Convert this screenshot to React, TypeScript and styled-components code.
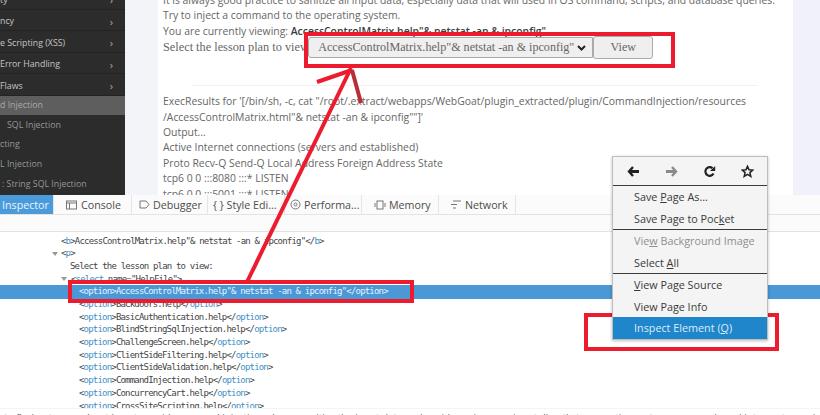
import React from "react";
import styled, { createGlobalStyle } from "styled-components";

const Global = createGlobalStyle`
  html, body { margin: 0; padding: 0; background: #fff; }
  body { font-family: "Liberation Sans", sans-serif; }
`;
const Page = styled.div`
  position: relative; width: 820px; height: 415px; overflow: hidden; background: #fff;
  display: flex; flex-direction: column;
`;
const Top = styled.div`
  height: 195px; display: flex; background: #f1f1f9; flex: none;
`;
const Sidebar = styled.div`
  width: 125px; height: 195px; background: #2c2c2c; overflow: hidden; flex: none;
  display: flex; flex-direction: column;
`;
const SideRow = styled.div<{ $active?: boolean; $sub?: boolean; $first?: boolean; $pad?: number }>`
  height: ${p => (p.$sub ? 19.6 : 21.5)}px; flex: none; display: flex; align-items: center; justify-content: space-between;
  box-sizing: border-box; padding: ${p => (p.$sub ? 0 : 3)}px 12px 0 ${p => p.$pad ?? 0}px;
  margin-top: ${p => (p.$first ? -12 : 0)}px;
  font: 8.8px "Open Sans", sans-serif; white-space: nowrap;
  color: ${p => (p.$active ? "#a9a9a9" : p.$sub ? "#969696" : "#c4c4c4")};
  background: ${p => (p.$active ? "#5e5e5e" : "transparent")};
  border-bottom: ${p => (p.$sub ? "0" : "1px solid #232323")};
`;
const Chevron = styled.span` color: #aaa; font-size: 11px; `;
const Gutter = styled.div` width: 33px; flex: none; background: #f3f3fa; `;
const Card = styled.div`
  width: 635px; flex: none; background: #fff; box-sizing: border-box; padding: 0 0 0 5px; height: 195px; overflow: hidden;
  font: 10.4px/15.4px "Open Sans", sans-serif; color: #666;
`;
const Line = styled.div` white-space: nowrap; `;
const TopLine = styled(Line)` margin-top: -7px; `;
const Strong = styled.b` font-weight: 600; color: #3c3c3c; `;
const PlanRow = styled.div`
  display: flex; align-items: center; height: 21px; margin-top: -2px;
  font: 12.3px "Liberation Serif", serif; color: #666; white-space: nowrap;
`;
const PlanSelect = styled.div`
  width: 285px; height: 21px; box-sizing: border-box; margin-left: -4px; padding: 0 6px 0 9px;
  display: flex; align-items: center; justify-content: space-between;
  background: #efefef; border: 1px solid #aaa; border-radius: 3px 0 0 3px;
  font: 12.1px "Liberation Serif", serif; color: #666;
`;
const PlanButton = styled.div`
  width: 60px; height: 23px; box-sizing: border-box; display: flex; align-items: center; justify-content: center;
  background: #efefef; border: 1px solid #aaa; border-radius: 3px;
  font: 12px "Liberation Serif", serif; color: #666;
`;
const Divider = styled.div` height: 1px; background: #f2f2f2; margin: 27px 0 8px 29px; width: 566px; `;

const Tabs = styled.div`
  height: 19px; flex: none; background: #fbfbfb; display: flex; align-items: stretch;
  border-bottom: 1px solid #e4e4e4; box-sizing: content-box;
  font: 10.7px "Open Sans", sans-serif; color: #4d4d4d;
`;
const Tab = styled.div<{ $active?: boolean; $w: number; $pad: number; $gap: number }>`
  width: ${p => p.$w}px; flex: none; box-sizing: border-box; display: flex; align-items: center; gap: ${p => p.$gap}px;
  padding-left: ${p => p.$pad}px; white-space: nowrap; overflow: hidden;
  background: ${p => (p.$active ? "#4a9bdb" : "transparent")};
  color: ${p => (p.$active ? "#eaf4fc" : "#4d4d4d")};
  border-right: 1px solid #e6e6e6;
`;
const Search = styled.div` height: 17px; flex: none; background: #fbfbfb; border-bottom: 1px solid #e2e2e2; box-sizing: border-box; `;
const Tree = styled.div`
  height: 176px; flex: none; overflow: hidden; background: #fff; position: relative;
  font: 9px/12.7px "DejaVu Sans Mono", monospace; letter-spacing: -0.81px; color: #444; padding-top: 2.6px; box-sizing: border-box;
`;
const Node = styled.div<{ $indent: number; $selected?: boolean }>`
  height: ${p => (p.$selected ? 13.5 : 12.7)}px; margin-bottom: ${p => (p.$selected ? -0.8 : 0)}px;
  white-space: nowrap; padding-left: ${p => p.$indent}px;
  background: ${p => (p.$selected ? "#4a98d6" : "transparent")};
  color: ${p => (p.$selected ? "#e8f3fb" : "#444")};
`;
const TagName = styled.span<{ $selected?: boolean }>` color: ${p => (p.$selected ? "#e8f3fb" : "#3f8fc4")}; `;
const Caret = styled.span<{ $x: number; $y: number }>`
  position: absolute; left: ${p => p.$x}px; top: ${p => p.$y}px; width: 0; height: 0;
  border: 3.5px solid transparent; border-top: 4px solid #999;
`;
const Bottom = styled.div`
  height: 7px; flex: none; overflow: hidden; background: #fff; box-sizing: border-box; padding: 4px 0 0 4px;
  border-top: 1px solid #f4f4f4;
  font: 9.9px/10px "Open Sans", sans-serif; color: #666; white-space: nowrap;
`;
const RedBox = styled.div<{ $x: number; $y: number; $w: number; $h: number }>`
  position: absolute; box-sizing: border-box; left: ${p => p.$x}px; top: ${p => p.$y}px;
  width: ${p => p.$w}px; height: ${p => p.$h}px; border: 4px solid #ec1c2e;
`;
const Overlay = styled.svg` position: absolute; left: 0; top: 0; pointer-events: none; `;

const Menu = styled.div`
  position: absolute; left: 612px; top: 156px; width: 156px; box-sizing: border-box;
  background: #f4f4f4; border: 1px solid #bdbdbd; box-shadow: 0 1px 3px rgba(0,0,0,.25);
  font: 10.8px "Open Sans", sans-serif; color: #3a3a3a;
`;
const MenuIcons = styled.div`
  height: 29px; display: flex; align-items: center; justify-content: space-between; padding: 0 13px 0 14px;
  border-bottom: 1px solid #3b3b3b; box-sizing: border-box;
`;
const MenuItem = styled.div<{ $disabled?: boolean; $active?: boolean }>`
  height: 21.5px; display: flex; align-items: center; padding-left: 21px; white-space: pre;
  color: ${p => (p.$disabled ? "#8f8f8f" : p.$active ? "#dcecf8" : "#3a3a3a")};
  background: ${p => (p.$active ? "#1f86cb" : "transparent")};
`;
const MenuSep = styled.div` height: 1px; background: #3b3b3b; `;

const sidebar = ["ty", "ncy", "e Scripting (XSS)", " Error Handling", "Flaws"];
const sub: [string, number][] = [["d Injection", 0], ["SQL Injection", 7], ["cting", 0], ["L Injection", 0], [": String SQL Injection", 2]];

const Tag = ({ o, s }: { o: string; s?: boolean }) => <>&lt;<TagName $selected={s}>{o}</TagName>&gt;</>;
const CloseTag = ({ o, s }: { o: string; s?: boolean }) => <>&lt;/<TagName $selected={s}>{o}</TagName>&gt;</>;
const options = ["Backdoors.help", "BasicAuthentication.help", "BlindStringSqlInjection.help", "ChallengeScreen.help", "ClientSideFiltering.help", "ClientSideValidation.help", "CommandInjection.help", "ConcurrencyCart.help", "CrossSiteScripting.help"];

export default function App() {
  return (
    <Page>
      <Global />
      <Top>
        <Sidebar>
          {sidebar.map((t, i) => <SideRow key={t} $first={i === 0}>{t}<Chevron>›</Chevron></SideRow>)}
          {sub.map(([t, pad], i) => <SideRow key={t} $sub $pad={pad} $active={i === 0}>{t}</SideRow>)}
        </Sidebar>
        <Gutter />
        <Card>
          <TopLine>It is always good practice to sanitize all input data, especially data that will used in OS command, scripts, and database queries.</TopLine>
          <Line>Try to inject a command to the operating system.</Line>
          <Line>You are currently viewing: <Strong>AccessControlMatrix.help"&amp; netstat -an &amp; ipconfig"</Strong></Line>
          <PlanRow>Select the lesson plan to view:
            <PlanSelect>AccessControlMatrix.help"&amp; netstat -an &amp; ipconfig"
              <svg width="9" height="6" viewBox="0 0 9 6"><path d="M1 1l3.5 3.500L8 1" fill="none" stroke="#222" strokeWidth="2" /></svg>
            </PlanSelect>
            <PlanButton>View</PlanButton>
          </PlanRow>
          <Divider />
          <Line>ExecResults for '[/bin/sh, -c, cat "/root/.extract/webapps/WebGoat/plugin_extracted/plugin/CommandInjection/resources</Line>
          <Line>/AccessControlMatrix.html"&amp; netstat -an &amp; ipconfig""]'</Line>
          <Line>Output...</Line>
          <Line>Active Internet connections (servers and established)</Line>
          <Line>Proto Recv-Q Send-Q Local Address Foreign Address State</Line>
          <Line>tcp6 0 0 :::8080 :::* LISTEN</Line>
          <Line>tcp6 0 0 :::5001 :::* LISTEN</Line>
        </Card>
      </Top>
      <Tabs>
        <Tab $active $w={54} $pad={2} $gap={0}>Inspector</Tab>
        <Tab $w={78} $pad={12} $gap={4}>
          <svg width="11" height="10" viewBox="0 0 11 10"><rect x=".5" y="1" width="10" height="8" fill="none" stroke="#777" /><path d="M.5 3h10M3.5 3v6" stroke="#777" /></svg>
          Console
        </Tab>
        <Tab $w={76} $pad={7} $gap={3}>
          <svg width="11" height="9" viewBox="0 0 11 9"><path d="M1 1h6l3 3.5L7 8H1z" fill="none" stroke="#777" /></svg>
          Debugger
        </Tab>
        <Tab $w={77} $pad={5} $gap={4}>{"{ }"} Style Edi...</Tab>
        <Tab $w={77} $pad={5} $gap={3}>
          <svg width="11" height="11" viewBox="0 0 11 11"><circle cx="5.5" cy="5.5" r="4.5" fill="none" stroke="#777" /><circle cx="5.5" cy="5.5" r="1.5" fill="none" stroke="#777" /></svg>
          Performa...
        </Tab>
        <Tab $w={77} $pad={12} $gap={3}>
          <svg width="12" height="10" viewBox="0 0 12 10"><rect x="3" y="1" width="6" height="8" fill="none" stroke="#777" /><path d="M1 3v4M11 3v4" stroke="#777" /></svg>
          Memory
        </Tab>
        <Tab $w={77} $pad={11} $gap={4}>
          <svg width="11" height="9" viewBox="0 0 11 9"><path d="M3 1h8M1 4.500h6M3 8h3" stroke="#777" /></svg>
          Network
        </Tab>
      </Tabs>
      <Search />
      <Tree>
        <Node $indent={61}><Tag o="b" />AccessControlMatrix.help"&amp; netstat -an &amp; ipconfig"<CloseTag o="b" /></Node>
        <Node $indent={61}><Tag o="p" /></Node>
        <Node $indent={70}>Select the lesson plan to view:</Node>
        <Node $indent={71}>&lt;<TagName>select</TagName> name="HelpFile"&gt;</Node>
        <Node $indent={79} $selected><Tag o="option" s />AccessControlMatrix.help"&amp; netstat -an &amp; ipconfig"<CloseTag o="option" s /></Node>
        {options.map(o => <Node key={o} $indent={79}><Tag o="option" />{o}<CloseTag o="option" /></Node>)}
        <Caret $x={52} $y={20} />
        <Caret $x={61} $y={45} />
      </Tree>
      <Bottom>to find out more about how to avoid command injection, always sanitize the input data and avoid passing user input directly to operating system commands and interpreters using eval</Bottom>

      <RedBox $x={304} $y={32} $w={371} $h={36} />
      <RedBox $x={68} $y={280} $w={346} $h={23} />
      <RedBox $x={584} $y={313} $w={195} $h={38} />
      <Overlay width="820" height="415" viewBox="0 0 820 415">
        <path d="M247 282 L351 68" stroke="#ec1c2e" strokeWidth="4" fill="none" />
        <path d="M317 82 L352 70" stroke="#ec1c2e" strokeWidth="4" fill="none" />
        <path d="M352 70 L361 103" stroke="#b92d38" strokeWidth="4" fill="none" />
      </Overlay>

      <Menu>
        <MenuIcons>
          <svg width="13" height="13" viewBox="0 0 13 13"><path d="M6 2L2 6.500L6 11" fill="none" stroke="#222" strokeWidth="2.400" /><path d="M3 6.500H12" stroke="#222" strokeWidth="3" /></svg>
          <svg width="13" height="13" viewBox="0 0 13 13"><path d="M7 2L11 6.500L7 11" fill="none" stroke="#8a8a8a" strokeWidth="2.400" /><path d="M1 6.500H10" stroke="#8a8a8a" strokeWidth="3" /></svg>
          <svg width="13" height="13" viewBox="0 0 13 13"><path d="M10.500 8.500A4.300 4.300 0 1 1 9.500 3.200" fill="none" stroke="#222" strokeWidth="2.200" /><path d="M7 6H12.200V1z" fill="#222" /></svg>
          <svg width="13" height="13" viewBox="0 0 13 13"><path d="M6.500 1.200L8 4.800l3.800.3-2.900 2.500.9 3.700-3.300-2-3.300 2 .9-3.700L1.200 5.100l3.800-.3z" fill="none" stroke="#222" strokeWidth="1.500" /></svg>
        </MenuIcons>
        <MenuItem>Save <u>P</u>age As...</MenuItem>
        <MenuItem>Save Page to Poc<u>k</u>et</MenuItem>
        <MenuSep />
        <MenuItem $disabled>Vie<u>w</u> Background Image</MenuItem>
        <MenuItem>Select <u>A</u>ll</MenuItem>
        <MenuSep />
        <MenuItem><u>V</u>iew Page Source</MenuItem>
        <MenuItem>View Page Info</MenuItem>
        <MenuItem $active>Inspect Element (<u>Q</u>)</MenuItem>
      </Menu>
    </Page>
  );
}
